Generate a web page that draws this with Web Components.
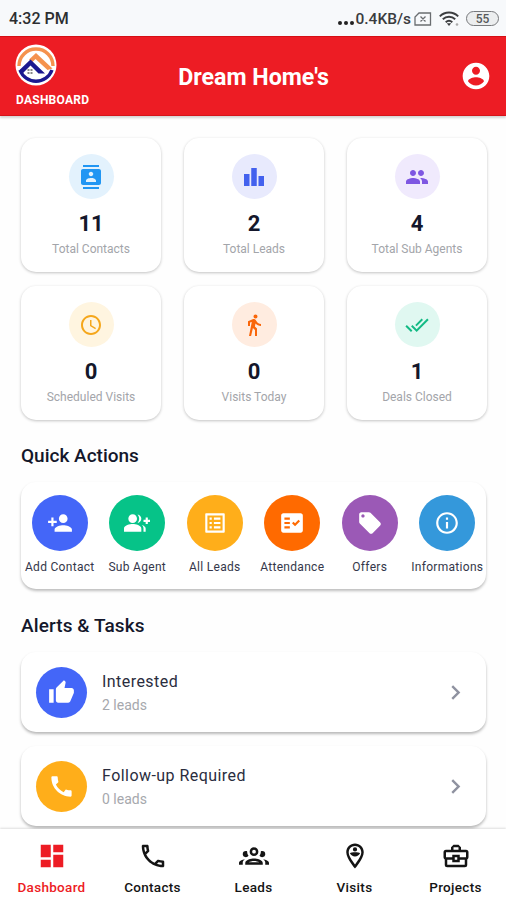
<!DOCTYPE html>
<html lang="en">
<head>
<meta charset="UTF-8">
<meta name="viewport" content="width=device-width, initial-scale=1.0">
<title>Dream Home's</title>
<style>
  html, body {
    margin: 0;
    height: 100%;
  }
  body {
    font-family: Roboto, "Liberation Sans", sans-serif;
    background: #fefefe;
    color: #14172b;
    overflow: hidden;
  }
</style>
</head>
<body>
<dashboard-app></dashboard-app>

<script>
// Icon paths, all on a 24x24 grid
const ICONS = {
  contacts: 'M20 0H4v2h16V0zM4 24h16v-2H4v2zM20 4H4c-1.1 0-2 .9-2 2v12c0 1.1.9 2 2 2h16c1.1 0 2-.9 2-2V6c0-1.1-.9-2-2-2zm-8 2.75c1.24 0 2.25 1.01 2.25 2.25s-1.01 2.25-2.25 2.25S9.75 10.24 9.75 9 10.76 6.75 12 6.75zM17 17H7v-1.5c0-1.67 3.33-2.5 5-2.5s5 .83 5 2.5V17z',
  bars: 'M7.5 21H2V9h5.5v12zm7.25-18h-5.5v18h5.5V3zM22 11h-5.5v10H22V11z',
  people: 'M16 11c1.66 0 2.99-1.34 2.99-3S17.66 5 16 5c-1.66 0-3 1.34-3 3s1.34 3 3 3zm-8 0c1.66 0 2.99-1.34 2.99-3S9.66 5 8 5C6.34 5 5 6.34 5 8s1.34 3 3 3zm0 2c-2.33 0-7 1.17-7 3.5V19h14v-2.5c0-2.33-4.67-3.5-7-3.5zm8 0c-.29 0-.62.02-.97.05 1.16.84 1.97 1.97 1.97 3.45V19h6v-2.5c0-2.33-4.67-3.5-7-3.5z',
  clock: 'M11.99 2C6.47 2 2 6.48 2 12s4.47 10 9.99 10C17.52 22 22 17.52 22 12S17.52 2 11.99 2zM12 20c-4.42 0-8-3.58-8-8s3.58-8 8-8 8 3.58 8 8-3.58 8-8 8zm.5-13H11v6l5.25 3.15.75-1.23-4.5-2.67z',
  walk: 'M13.5 5.5c1.1 0 2-.9 2-2s-.9-2-2-2-2 .9-2 2 .9 2 2 2zM9.8 8.9L7 23h2.1l1.8-8 2.1 2v6h2v-7.5l-2.1-2 .6-3C14.8 12 16.8 13 19 13v-2c-1.9 0-3.5-1-4.3-2.4l-1-1.6c-.4-.6-1-1-1.7-1-.3 0-.5.1-.8.1L6 8.3V13h2V9.6l1.8-.7',
  doneAll: 'M18 7l-1.41-1.41-6.34 6.34 1.41 1.41L18 7zm4.24-1.41L11.66 16.17 7.48 12l-1.41 1.41L11.66 19l12-12-1.42-1.41zM.41 13.41L6 19l1.41-1.41L1.83 12 .41 13.41z',
  personAdd: 'M15 12c2.21 0 4-1.79 4-4s-1.79-4-4-4-4 1.79-4 4 1.79 4 4 4zm-9-2V7H4v3H1v2h3v3h2v-3h3v-2H6zm9 4c-2.67 0-8 1.34-8 4v2h16v-2c0-2.66-5.33-4-8-4z',
  groupAdd: 'M22 9V7h-2v2h-2v2h2v2h2v-2h2V9h-2zM8 12c2.21 0 4-1.79 4-4s-1.79-4-4-4-4 1.79-4 4 1.79 4 4 4zm0 1c-2.67 0-8 1.34-8 4v3h16v-3c0-2.66-5.33-4-8-4zm4.51-8.95C13.43 5.11 14 6.49 14 8s-.57 2.89-1.49 3.95C14.47 11.7 16 10.04 16 8s-1.53-3.7-3.49-3.95zm4.02 9.78C17.42 14.66 18 15.7 18 17v3h2v-3c0-1.45-1.59-2.51-3.47-3.17z',
  list: 'M19 5v14H5V5h14m1.1-2H3.9c-.5 0-.9.4-.9.9v16.2c0 .4.4.9.9.9h16.2c.4 0 .9-.5.9-.9V3.9c0-.5-.5-.9-.9-.9zM11 7h6v2h-6V7zm0 4h6v2h-6v-2zm0 4h6v2h-6zM7 7h2v2H7zm0 4h2v2H7zm0 4h2v2H7z',
  factCheck: 'M20 3H4c-1.1 0-2 .9-2 2v14c0 1.1.9 2 2 2h16c1.1 0 2-.9 2-2V5c0-1.1-.9-2-2-2zM10 17H5v-2h5v2zm0-4H5v-2h5v2zm0-4H5V7h5v2zm4.82 6L12 12.16l1.41-1.41 1.41 1.42L17.99 9l1.42 1.42L14.82 15z',
  offer: 'M21.41 11.58l-9-9C12.05 2.22 11.55 2 11 2H4c-1.1 0-2 .9-2 2v7c0 .55.22 1.05.59 1.42l9 9c.36.36.86.58 1.41.58.55 0 1.05-.22 1.41-.59l7-7c.37-.36.59-.86.59-1.41 0-.55-.23-1.06-.59-1.42zM5.5 7C4.67 7 4 6.33 4 5.5S4.67 4 5.5 4 7 4.67 7 5.5 6.33 7 5.5 7z',
  info: 'M11 7h2v2h-2zm0 4h2v6h-2zm1-9C6.48 2 2 6.48 2 12s4.48 10 10 10 10-4.48 10-10S17.52 2 12 2zm0 18c-4.41 0-8-3.59-8-8s3.59-8 8-8 8 3.59 8 8-3.59 8-8 8z',
  thumbUp: 'M1 21h4V9H1v12zm22-11c0-1.1-.9-2-2-2h-6.31l.95-4.57.03-.32c0-.41-.17-.79-.44-1.06L14.17 1 7.59 7.59C7.22 7.95 7 8.45 7 9v10c0 1.1.9 2 2 2h9c.83 0 1.54-.5 1.84-1.22l3.02-7.05c.09-.23.14-.47.14-.73v-2z',
  call: 'M20.01 15.38c-1.23 0-2.42-.2-3.53-.56-.35-.12-.74-.03-1.01.24l-1.57 1.97c-2.83-1.35-5.48-3.9-6.89-6.83l1.95-1.66c.27-.28.35-.67.24-1.02-.37-1.11-.56-2.3-.56-3.53 0-.54-.45-.99-.99-.99H4.19C3.65 3 3 3.24 3 3.99 3 13.28 10.73 21 20.01 21c.71 0 .99-.63.99-1.18v-3.45c0-.54-.45-.99-.99-.99z',
  account: 'M12 2C6.48 2 2 6.48 2 12s4.48 10 10 10 10-4.48 10-10S17.52 2 12 2zm0 3c1.66 0 3 1.34 3 3s-1.34 3-3 3-3-1.34-3-3 1.34-3 3-3zm0 14.2c-2.5 0-4.71-1.28-6-3.22.03-1.99 4-3.08 6-3.08 1.99 0 5.97 1.09 6 3.08-1.29 1.94-3.5 3.22-6 3.22z',
  chevron: 'M10 6L8.59 7.41 13.17 12l-4.58 4.59L10 18l6-6z',
  dashboard: 'M13 3v6h8V3M13 21h8V11h-8M3 21h8v-6H3M3 13h8V3H3v10z',
  phone: 'M20 15.5c-1.2 0-2.5-.2-3.6-.6h-.3c-.3 0-.5.1-.7.3l-2.2 2.2c-2.8-1.5-5.2-3.8-6.6-6.6l2.2-2.2c.3-.3.4-.7.2-1-.3-1.1-.5-2.4-.5-3.6 0-.5-.5-1-1-1H4c-.5 0-1 .5-1 1 0 9.4 7.6 17 17 17 .5 0 1-.5 1-1v-3.5c0-.5-.5-1-1-1M5 5h1.5c.1.9.3 1.8.5 2.6L5.8 8.8C5.4 7.6 5.1 6.3 5 5m14 14c-1.3-.1-2.6-.4-3.8-.8l1.2-1.2c.8.2 1.7.4 2.6.4V19z',
  group: 'M12 5A3.5 3.5 0 0 0 8.5 8.5 3.5 3.5 0 0 0 12 12a3.5 3.5 0 0 0 3.5-3.5A3.5 3.5 0 0 0 12 5m0 2a1.5 1.5 0 0 1 1.5 1.5A1.5 1.5 0 0 1 12 10a1.5 1.5 0 0 1-1.5-1.5A1.5 1.5 0 0 1 12 7M5.5 8A2.5 2.5 0 0 0 3 10.5c0 .94.53 1.75 1.29 2.18.36.2.77.32 1.21.32s.85-.12 1.21-.32c.37-.21.68-.51.91-.87A5.42 5.42 0 0 1 6.5 8.22C6.2 8.08 5.86 8 5.5 8m13 0c-.36 0-.7.08-1 .22 0 1.48-.39 2.64-1.12 3.59.24.37.54.66.91.87.36.2.77.32 1.21.32s.85-.12 1.21-.32c.76-.43 1.29-1.24 1.29-2.18A2.5 2.5 0 0 0 18.5 8M12 14c-2.34 0-7 1.17-7 3.5V19h14v-1.5c0-2.33-4.66-3.5-7-3.5m-7.29.55C2.78 14.78 0 15.76 0 17.5V19h3v-1.93c0-1.01.69-1.85 1.71-2.52m14.58 0c1.02.67 1.71 1.51 1.71 2.52V19h3v-1.5c0-1.74-2.78-2.72-4.71-2.95M12 16c1.53 0 3.24.5 4.23 1H7.77c.99-.5 2.7-1 4.23-1z',
  pin: 'M12 2c3.86 0 7 3.14 7 7 0 5.25-7 13-7 13S5 14.25 5 9c0-3.86 3.14-7 7-7m0 2C9.24 4 7 6.24 7 9c0 1 0 3 5 9.71C17 12 17 10 17 9c0-2.76-2.24-5-5-5m0 1a1.7 1.7 0 1 1 0 3.4A1.7 1.7 0 0 1 12 5m-4.1 4.8C8.6 8.9 10.2 8.9 12 8.9s3.4 0 4.1.9c-.8 1.5-2.3 2.6-4.1 2.6s-3.3-1.1-4.1-2.6z',
  briefcase: 'M10 3h4l2 2v2h4a2 2 0 0 1 2 2v4a2 2 0 0 1-1 1.7V19a2 2 0 0 1-2 2H5a2 2 0 0 1-2-2v-4.3A2 2 0 0 1 2 13V9a2 2 0 0 1 2-2h4V5l2-2m0 2v2h4V5h-4M4 9v4h5v-2h6v2h5V9H4m7 4v2h2v-2h-2m-6 2v4h14v-4h-4v2H9v-2H5z'
};

class MdIcon extends HTMLElement {
  constructor() {
    super();
    this.attachShadow({ mode: 'open' });
  }

  connectedCallback() {
    const size = this.getAttribute('size') || 24;
    this.shadowRoot.innerHTML = `
      <style>
        :host { display: inline-flex; flex: none; }
        svg { display: block; fill: currentColor; fill-rule: evenodd; }
      </style>
      <svg width="${size}" height="${size}" viewBox="0 0 24 24"><path d="${ICONS[this.getAttribute('name')]}"/></svg>
    `;
  }
}

class StatusBar extends HTMLElement {
  constructor() {
    super();
    this.attachShadow({ mode: 'open' }).innerHTML = `
      <style>
        :host {
          display: flex;
          flex: none;
          align-items: center;
          justify-content: space-between;
          height: 36px;
          box-sizing: border-box;
          padding: 1px 7px 0 9px;
          background: #f7f9fb;
          color: #2c2e30;
          font-size: 16px;
          font-weight: 500;
        }
        .right { display: flex; align-items: center; }
        .dots { display: flex; gap: 2px; margin: 8px 1px 0 0; }
        .dots i { width: 4px; height: 4px; border-radius: 50%; background: #222; }
        .speed { font-size: 15.5px; color: #3a3c3e; }
        svg { display: block; fill: none; stroke: #6a6d70; }
        .sim { margin-left: 3px; }
        .wifi { margin-left: 7px; }
        .battery {
          display: flex;
          align-items: center;
          justify-content: center;
          box-sizing: border-box;
          width: 33px;
          height: 15px;
          margin-left: 7px;
          border: 1.5px solid #77797c;
          border-radius: 8px;
          background: #eceeef;
          color: #55585a;
          font-size: 12px;
        }
      </style>
      <span>4:32 PM</span>
      <div class="right">
        <div class="dots"><i></i><i></i><i></i></div>
        <span class="speed">0.4KB/s</span>
        <svg class="sim" width="18" height="14" viewBox="0 0 18 14">
          <path d="M5 1h11.5v12H1V5z M6.5 4.5l5 5 M11.5 4.5l-5 5" stroke-width="1.3"/>
        </svg>
        <svg class="wifi" width="20" height="16" viewBox="0 0 20 16">
          <path d="M.8 5.3a13 13 0 0 1 18.4 0M3.8 8.3a9 9 0 0 1 12.4 0M6.7 11.2a5 5 0 0 1 6.6 0" stroke="#3c3e40" stroke-width="1.9"/>
          <path d="M7.8 12.3h4.4L10 15z" fill="#3c3e40" stroke="none"/>
          <circle cx="18" cy="13.500" r="1.300" fill="#aaa" stroke="none"/>
        </svg>
        <div class="battery">55</div>
      </div>
    `;
  }
}

class AppHeader extends HTMLElement {
  constructor() {
    super();
    this.attachShadow({ mode: 'open' }).innerHTML = `
      <style>
        :host {
          display: grid;
          flex: none;
          grid-template-columns: 1fr auto 1fr;
          align-items: center;
          height: 80px;
          box-sizing: border-box;
          padding: 0 14px 0 16px;
          background: #ed1c24;
          border-top: 1px solid #d50f14;
          border-bottom: 1px solid #d5141a;
          box-shadow: 0 2px 2px rgba(0, 0, 0, .16);
          color: #fff;
        }
        .brand { font-size: 12px; font-weight: 700; line-height: 14px; letter-spacing: .25px; }
        .brand svg { display: block; margin: -1px 0 7px -1px; }
        h1 { margin: 1px 0 0 -1px; font-size: 23.2px; font-weight: 700; line-height: 28px; }
        md-icon { justify-self: end; }
      </style>
      <div class="brand">
        <svg width="42" height="42" viewBox="0 0 42 42">
          <circle cx="21" cy="21" r="20.5" fill="#fff"/>
          <path d="M4 22a17 17 0 0 1 34 0" fill="none" stroke="#f5924e" stroke-width="3.4"/>
          <path d="M5 26a17 17 0 0 0 32 0" fill="none" stroke="#1b1890" stroke-width="3.4"/>
          <path d="M14 15.500l7-6.500 16.500 15.500-5 1.500L20.500 15l-3 3z" fill="#f5924e"/>
          <path d="M4.500 26L15.500 15.500l14.500 14h-6.500L15.500 21.500l-7.500 7.500z" fill="#1b1890"/>
          <path d="M12.500 25h2v2h-2zM15.500 25h2v2h-2zM12.500 28h2v2h-2zM15.500 28h2v2h-2z" fill="#888"/>
        </svg>
        <span>DASHBOARD</span>
      </div>
      <h1>Dream Home's</h1>
      <md-icon name="account" size="32"></md-icon>
    `;
  }
}

class StatCard extends HTMLElement {
  constructor() {
    super();
    this.attachShadow({ mode: 'open' });
  }

  connectedCallback() {
    this.shadowRoot.innerHTML = `
      <style>
        :host {
          display: flex;
          flex-direction: column;
          align-items: center;
          box-sizing: border-box;
          height: 134px;
          padding-top: 16px;
          border-radius: 15px;
          background: #fff;
          box-shadow: 0 1px 3px rgba(0, 0, 0, .24);
        }
        .circle {
          display: flex;
          align-items: center;
          justify-content: center;
          width: 45px;
          height: 45px;
          border-radius: 50%;
          color: ${this.getAttribute('color')};
          background: ${this.getAttribute('tint')};
        }
        .value { margin-top: 11px; font-size: 22px; line-height: 28px; font-weight: 700; color: #14172b; }
        .label { margin-top: 3px; font-size: 12px; line-height: 16px; color: #a3a5aa; white-space: nowrap; }
      </style>
      <div class="circle"><md-icon name="${this.getAttribute('icon')}"></md-icon></div>
      <div class="value">${this.getAttribute('value')}</div>
      <div class="label"><slot></slot></div>
    `;
  }
}

class QuickAction extends HTMLElement {
  constructor() {
    super();
    this.attachShadow({ mode: 'open' });
  }

  connectedCallback() {
    this.shadowRoot.innerHTML = `
      <style>
        :host {
          display: flex;
          flex: 1 1 0;
          min-width: 0;
          flex-direction: column;
          align-items: center;
          font-size: 12px;
          line-height: 16px;
          letter-spacing: .3px;
          color: #34374a;
          white-space: nowrap;
        }
        .circle {
          display: flex;
          align-items: center;
          justify-content: center;
          width: 56px;
          height: 56px;
          margin-bottom: 8px;
          border-radius: 50%;
          color: #fff;
          background: ${this.getAttribute('color')};
        }
      </style>
      <div class="circle"><md-icon name="${this.getAttribute('icon')}" size="26"></md-icon></div>
      <slot></slot>
    `;
  }
}

class AlertRow extends HTMLElement {
  constructor() {
    super();
    this.attachShadow({ mode: 'open' });
  }

  connectedCallback() {
    this.shadowRoot.innerHTML = `
      <style>
        :host {
          display: flex;
          align-items: center;
          box-sizing: border-box;
          height: 80px;
          padding: 0 16px 0 15px;
          border-radius: 15px;
          background: #fff;
          box-shadow: 0 2px 3px rgba(0, 0, 0, .28);
        }
        .circle {
          display: flex;
          align-items: center;
          justify-content: center;
          width: 51px;
          height: 51px;
          border-radius: 50%;
          color: #fff;
          background: ${this.getAttribute('color')};
        }
        .text { flex: 1; margin-left: 15px; }
        .title { font-size: 16px; line-height: 22px; letter-spacing: .45px; color: #2a2d3e; }
        .count { margin-top: 3px; font-size: 14px; line-height: 18px; color: #a6a8ad; }
        .arrow { color: #8f92a0; }
      </style>
      <div class="circle"><md-icon name="${this.getAttribute('icon')}" size="${this.getAttribute('icon-size')}"></md-icon></div>
      <div class="text">
        <div class="title"><slot></slot></div>
        <div class="count">${this.getAttribute('count')}</div>
      </div>
      <md-icon class="arrow" name="chevron" size="29"></md-icon>
    `;
  }
}

class NavItem extends HTMLElement {
  constructor() {
    super();
    this.attachShadow({ mode: 'open' });
  }

  connectedCallback() {
    this.shadowRoot.innerHTML = `
      <style>
        :host {
          display: flex;
          flex: 1 1 0;
          flex-direction: column;
          align-items: center;
          gap: 7px;
          padding-top: 12px;
          font-size: 13.5px;
          line-height: 18px;
          font-weight: 500;
          letter-spacing: .3px;
          color: #141414;
        }
        :host([active]) { color: #ed1c24; }
      </style>
      <md-icon name="${this.getAttribute('icon')}" size="30"></md-icon>
      <slot></slot>
    `;
  }
}

class DashboardApp extends HTMLElement {
  constructor() {
    super();
    this.attachShadow({ mode: 'open' }).innerHTML = `
      <style>
        :host {
          display: flex;
          flex-direction: column;
          height: 100vh;
        }
        main {
          flex: 1;
          min-height: 0;
          overflow: hidden;
          padding: 22px 20px 0 21px;
        }
        .stats {
          display: grid;
          grid-template-columns: repeat(3, 1fr);
          gap: 14px 23px;
          margin-right: -1px;
        }
        h2 {
          margin: 0;
          font-size: 19px;
          line-height: 24px;
          font-weight: 500;
          color: #14172b;
        }
        .stats + h2 { margin-top: 24px; }
        .actions {
          display: flex;
          box-sizing: border-box;
          height: 107px;
          margin: 14px 0 25px;
          padding-top: 13px;
          border-radius: 15px;
          background: #fff;
          box-shadow: 0 2px 3px rgba(0, 0, 0, .26);
        }
        .actions + h2 { letter-spacing: .1px; }
        .alerts {
          display: grid;
          gap: 14px;
          margin-top: 14px;
        }
        nav {
          display: flex;
          flex: none;
          height: 71px;
          background: #fff;
          box-shadow: 0 -1px 2px rgba(0, 0, 0, .13);
          padding-left: 1px;
          position: relative;
        }
      </style>
      <status-bar></status-bar>
      <app-header></app-header>
      <main>
        <div class="stats">
          <stat-card icon="contacts" value="11" color="#2196f3" tint="#e3f2fd">Total Contacts</stat-card>
          <stat-card icon="bars" value="2" color="#4361ee" tint="#e8eafd">Total Leads</stat-card>
          <stat-card icon="people" value="4" color="#7e57e2" tint="#f0eafd">Total Sub Agents</stat-card>
          <stat-card icon="clock" value="0" color="#f5a71c" tint="#fff5e0">Scheduled Visits</stat-card>
          <stat-card icon="walk" value="0" color="#f9660a" tint="#ffece0">Visits Today</stat-card>
          <stat-card icon="doneAll" value="1" color="#12ba84" tint="#e0f8f1">Deals Closed</stat-card>
        </div>
        <h2>Quick Actions</h2>
        <div class="actions">
          <quick-action icon="personAdd" color="#4466f8">Add Contact</quick-action>
          <quick-action icon="groupAdd" color="#06c388">Sub Agent</quick-action>
          <quick-action icon="list" color="#ffae1a">All Leads</quick-action>
          <quick-action icon="factCheck" color="#ff6a00">Attendance</quick-action>
          <quick-action icon="offer" color="#9b59b6">Offers</quick-action>
          <quick-action icon="info" color="#3498db">Informations</quick-action>
        </div>
        <h2>Alerts &amp; Tasks</h2>
        <div class="alerts">
          <alert-row icon="thumbUp" icon-size="27" color="#4466f8" count="2 leads">Interested</alert-row>
          <alert-row icon="call" icon-size="27" color="#ffae1a" count="0 leads">Follow-up Required</alert-row>
        </div>
      </main>
      <nav>
        <nav-item icon="dashboard" active>Dashboard</nav-item>
        <nav-item icon="phone">Contacts</nav-item>
        <nav-item icon="group">Leads</nav-item>
        <nav-item icon="pin">Visits</nav-item>
        <nav-item icon="briefcase">Projects</nav-item>
      </nav>
    `;
  }
}

customElements.define('md-icon', MdIcon);
customElements.define('status-bar', StatusBar);
customElements.define('app-header', AppHeader);
customElements.define('stat-card', StatCard);
customElements.define('quick-action', QuickAction);
customElements.define('alert-row', AlertRow);
customElements.define('nav-item', NavItem);
customElements.define('dashboard-app', DashboardApp);
</script>
</body>
</html>
